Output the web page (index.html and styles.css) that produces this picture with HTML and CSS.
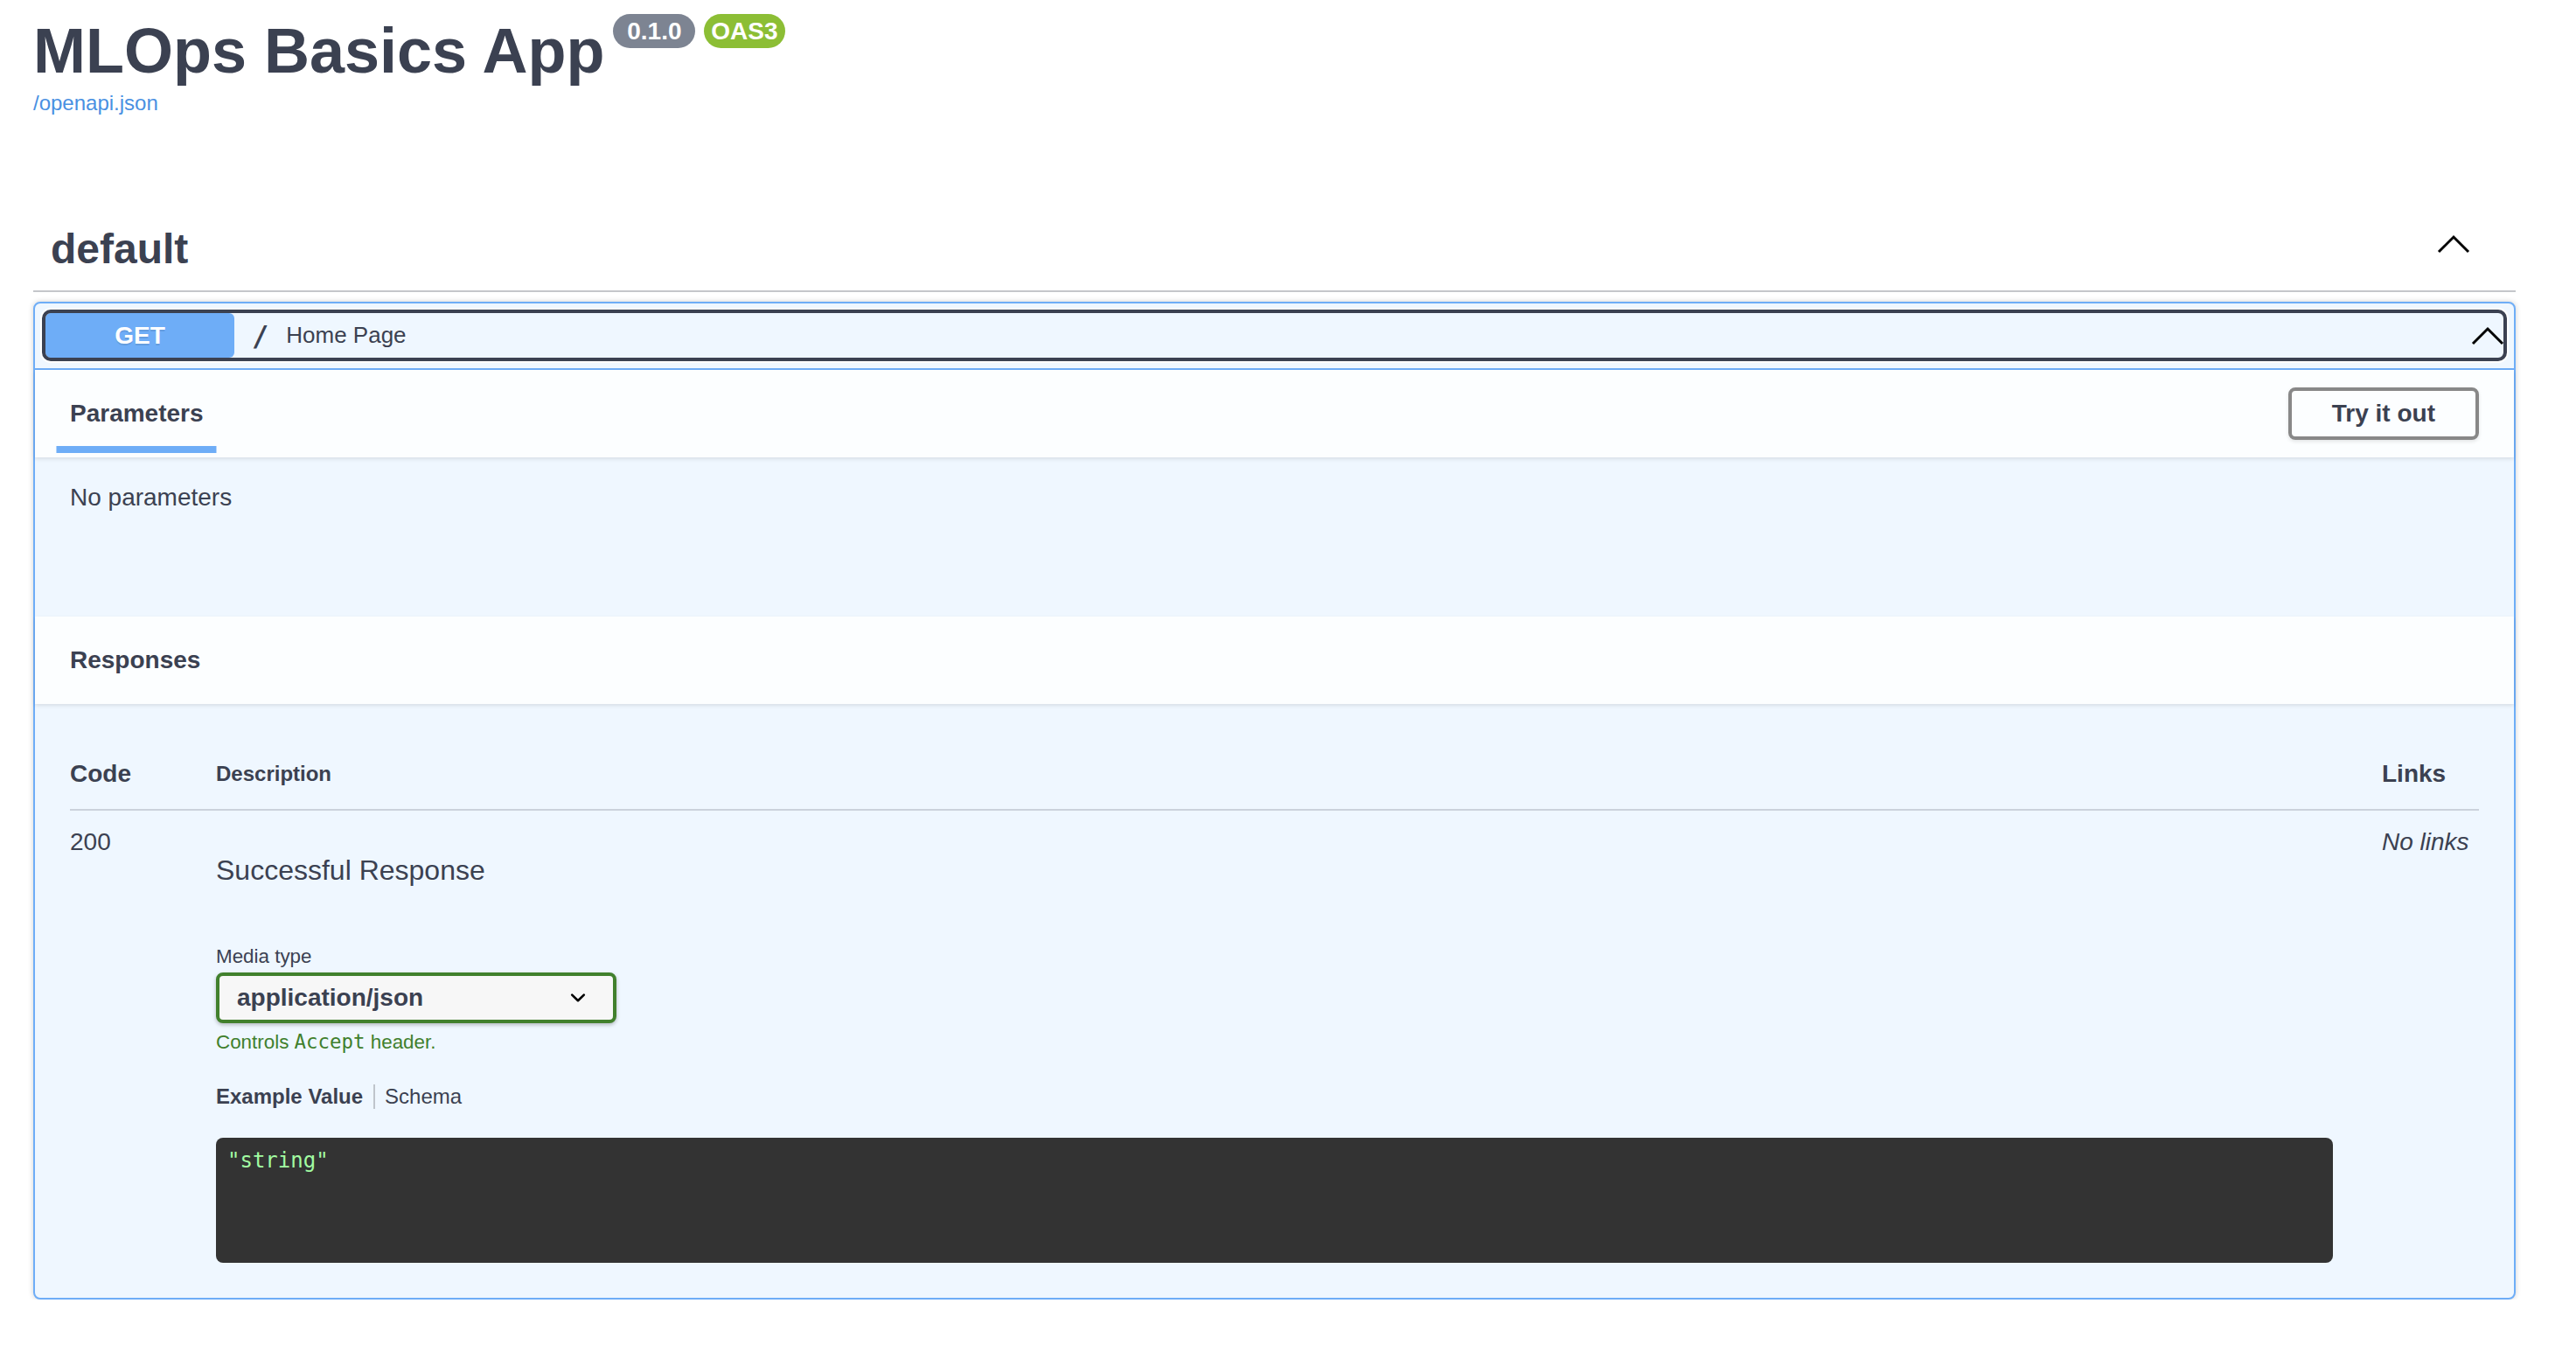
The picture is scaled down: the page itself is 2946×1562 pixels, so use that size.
FILE: index.html
```html
<!DOCTYPE html>
<html lang="en">
<head>
<meta charset="utf-8">
<title>MLOps Basics App - Swagger UI</title>
<link rel="stylesheet" href="styles.css">
</head>
<body>
<div class="wrapper">
  <div class="info">
    <div class="title-row">
      <h2 class="title">MLOps Basics App</h2>
      <span class="stamp"> 0.1.0 </span>
      <span class="stamp oas">OAS3</span>
    </div>
    <a class="url" href="#">/openapi.json</a>
  </div>

  <div class="tag-section">
    <h3 class="tag">
      <span>default</span>
      <svg class="tag-arrow" width="40" height="40" viewBox="0 0 20 20"><polyline points="1.5,14.5 10,6 18.5,14.5" fill="none" stroke="#000" stroke-width="1.5"/></svg>
    </h3>

    <div class="opblock">
      <div class="summary">
        <div class="summary-control">
          <span class="method">GET</span>
          <span class="path">/</span>
          <span class="desc">Home Page</span>
          <svg class="sum-arrow" width="40" height="40" viewBox="0 0 20 20"><polyline points="1.5,14.5 10,6 18.5,14.5" fill="none" stroke="#000" stroke-width="1.5"/></svg>
        </div>
      </div>

      <div class="section-header">
        <div class="tab-item"><h4><span class="tab-label">Parameters</span></h4></div>
        <button class="btn">Try it out</button>
      </div>
      <div class="params-body">
        <p>No parameters</p>
      </div>

      <div class="section-header">
        <h4>Responses</h4>
      </div>
      <div class="responses-inner">
        <div class="row head">
          <div class="col-code">Code</div>
          <div class="col-desc">Description</div>
          <div class="col-links">Links</div>
        </div>
        <div class="row body">
          <div class="col-code code-val">200</div>
          <div class="col-desc">
            <p class="resp-desc">Successful Response</p>
            <div class="media-title">Media type</div>
            <div class="select">
              <span>application/json</span>
              <svg width="40" height="40" viewBox="0 0 20 20"><polyline points="6.6,8.3 10,11.6 13.4,8.3" fill="none" stroke="#000" stroke-width="1.3" stroke-linecap="round" stroke-linejoin="round"/></svg>
            </div>
            <div class="accept-msg">Controls <code>Accept</code> header.</div>
            <ul class="model-tab">
              <li class="active">Example Value</li>
              <li>Schema</li>
            </ul>
            <pre class="microlight">"string"</pre>
          </div>
          <div class="col-links"><i>No links</i></div>
        </div>
      </div>
    </div>
  </div>
</div>
</body>
</html>
```
FILE: styles.css
```css
* { box-sizing: border-box; }

body {
  margin: 0;
  background: #fff;
  font-family: "Liberation Sans", Arial, sans-serif;
  color: #3b4151;
}

.wrapper {
  padding: 0 69px 0 38px;
}

/* ---------- info ---------- */
.title-row {
  display: flex;
  align-items: flex-start;
  padding-top: 16px;
}

.title {
  margin: 6px 10px 0 0;
  font-size: 72px;
  line-height: 72px;
  font-weight: 700;
  color: #3b4151;
}

.stamp {
  display: inline-block;
  margin-right: 10px;
  padding: 4px 8px;
  border-radius: 57px;
  background: #7d8492;
  color: #fff;
  font-size: 28px;
  line-height: 31px;
  font-weight: 700;
  white-space: pre;
}

.stamp.oas {
  background: #8cbe35;
}

.url {
  display: block;
  margin-top: 10px;
  font-size: 24px;
  line-height: 28px;
  color: #4990e2;
  text-decoration: none;
}

/* ---------- tag ---------- */
.tag-section {
  margin-top: 105px;
}

.tag {
  display: flex;
  align-items: center;
  justify-content: space-between;
  margin: 0 0 11px;
  padding: 20px 51px 20px 20px;
  font-size: 48px;
  line-height: 55px;
  font-weight: 700;
  color: #3b4151;
  border-bottom: 2px solid rgba(59, 65, 81, 0.3);
}

.tag-arrow {
  margin-bottom: 11px;
}

/* ---------- opblock ---------- */
.opblock {
  border: 2px solid #6eadf7;
  border-radius: 8px;
  background: #eff7ff;
  box-shadow: 0 0 6px rgba(0, 0, 0, 0.19);
}

.summary {
  padding: 11px 12px 12px;
  border-bottom: 2px solid #6eadf7;
}

.summary-control {
  display: flex;
  align-items: center;
  height: 51px;
  border-radius: 6px;
  outline: 4px solid #3b4151;
  box-shadow: 0 0 0 6px rgba(255, 255, 255, 0.9);
}

.method {
  width: 216px;
  height: 51px;
  border-radius: 6px;
  background: #6eadf7;
  color: #fff;
  font-size: 28px;
  line-height: 51px;
  font-weight: 700;
  text-align: center;
  text-shadow: 0 2px 0 rgba(0, 0, 0, 0.1);
}

.path {
  padding: 0 20px;
  font-family: "DejaVu Sans Mono", monospace;
  font-size: 32px;
  font-weight: 600;
  color: #3b4151;
}

.desc {
  flex: 1;
  font-size: 26px;
  color: #3b4151;
}

.sum-arrow {
  margin-right: -2px;
}

/* ---------- section headers ---------- */
.section-header {
  position: relative;
  display: flex;
  align-items: center;
  justify-content: space-between;
  min-height: 100px;
  padding: 16px 40px;
  background: rgba(255, 255, 255, 0.8);
  box-shadow: 0 2px 4px rgba(0, 0, 0, 0.1);
}

.section-header h4 {
  margin: 0;
  font-size: 28px;
  font-weight: 700;
  color: #3b4151;
}

.tab-label {
  position: relative;
}

.tab-label::after {
  content: "";
  position: absolute;
  left: 50%;
  bottom: -30px;
  width: 120%;
  height: 8px;
  transform: translateX(-50%);
  background: #6eadf7;
}

.btn {
  padding: 10px 46px;
  border: 4px solid #888;
  border-radius: 8px;
  background: transparent;
  box-shadow: 0 2px 4px rgba(0, 0, 0, 0.1);
  font-family: inherit;
  font-size: 28px;
  line-height: 32px;
  font-weight: 700;
  color: #3b4151;
}

.params-body {
  height: 182px;
  padding: 30px 40px;
}

.params-body p {
  margin: 0;
  font-size: 28px;
  line-height: 32px;
}

/* ---------- responses ---------- */
.responses-inner {
  padding: 40px 40px 40px;
}

.row {
  display: grid;
  grid-template-columns: 167px 1fr 111px;
}

.row.head {
  align-items: center;
  padding: 24px 0;
  border-bottom: 2px solid rgba(59, 65, 81, 0.2);
  font-weight: 700;
}

.row.head .col-code,
.row.head .col-links {
  font-size: 28px;
  line-height: 32px;
}

.row.head .col-desc {
  font-size: 24px;
  line-height: 32px;
}

.row.body {
  padding-top: 20px;
  align-items: start;
}

.code-val,
.row.body .col-links {
  font-size: 28px;
  line-height: 32px;
}

.resp-desc {
  margin: 30px 0 66px;
  font-size: 32px;
  line-height: 37px;
}

.media-title {
  font-size: 22.4px;
  line-height: 28px;
}

.select {
  display: flex;
  align-items: center;
  justify-content: space-between;
  width: 458px;
  height: 58px;
  margin-top: 4px;
  padding: 0 20px;
  border: 4px solid #41802d;
  border-radius: 8px;
  background: #f7f7f7;
  box-shadow: 0 2px 4px rgba(0, 0, 0, 0.25);
  font-size: 28px;
  font-weight: 700;
  color: #3b4151;
}

.accept-msg {
  margin-top: 7px;
  font-size: 22.4px;
  line-height: 28px;
  color: #41802d;
}

.accept-msg code {
  font-family: "DejaVu Sans Mono", monospace;
  font-size: 22.4px;
}

.model-tab {
  display: flex;
  margin: 34px 0 33px;
  padding: 0;
  list-style: none;
  font-size: 24px;
  line-height: 28px;
}

.model-tab li.active {
  font-weight: 700;
  padding-right: 12px;
  margin-right: 11px;
  border-right: 2px solid rgba(0, 0, 0, 0.2);
}

.microlight {
  height: 143px;
  margin: 0 56px 0 0;
  padding: 12px 13px;
  border-radius: 8px;
  background: #333;
  color: #a2fca2;
  font-family: "DejaVu Sans Mono", monospace;
  font-size: 24px;
  line-height: 28px;
}

.row.body .col-links i {
  font-style: italic;
}
```
